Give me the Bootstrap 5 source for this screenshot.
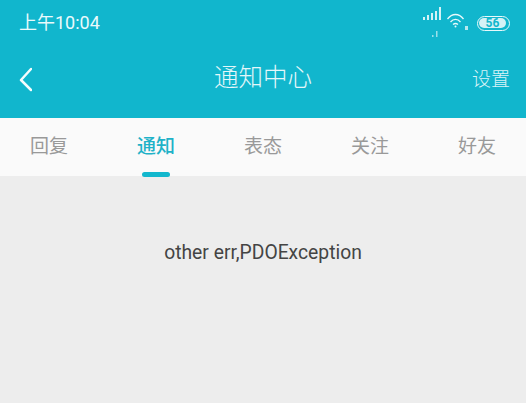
<!DOCTYPE html>
<html lang="zh">
<head>
    <meta charset="UTF-8">
    <title>通知中心</title>
    <link href="https://cdn.jsdelivr.net/npm/bootstrap@5.3.0/dist/css/bootstrap.min.css" rel="stylesheet">
    <style>
        html, body { height: 100%; overflow: hidden; }
        body { background: #ededed; font-family: Roboto, "Noto Sans CJK SC", sans-serif; }
        .topbar { background: #11b6cd; color: #fff; height: 118px; }
        .statusrow { height: 46px; padding: 0 16px 0 19px; }
        .clock { font-size: 18px; line-height: 1; color: #eafafc; }
        .titlerow { height: 72px; padding: 0 16px 4px 19px; position: relative; }
        .pagetitle { font-size: 24.500px; position: absolute; left: 0; right: 0; top: 12px; text-align: center; line-height: 40px; color: #e4f7fa; font-weight: 300; }
        .setlink { font-size: 19px; color: #d8f3f7; font-weight: 300; }
        .tabrow { background: #fafafa; height: 58px; padding: 0 19px; }
        .tabitem { width: 60px; text-align: center; font-size: 19px; line-height: 57px; color: #999; position: relative; }
        .tabitem.on { color: #1fb2c8; font-weight: 500; }
        .tabitem.on::after { content: ""; position: absolute; left: 16px; bottom: -1px; width: 28px; height: 5px; border-radius: 3px; background: #12b7cd; }
        .errmsg { font-size: 19.300px; color: #444; text-align: center; padding-top: 62px; line-height: 30px; }
        .batt { width: 33px; height: 15px; border: 1.5px solid #e8f9fb; border-radius: 8px; padding: 1px; position: relative; }
        .battfill { display: block; width: 27px; height: 10px; background: #d5f2f6; border-radius: 5px; font-size: 12px; font-weight: 700; line-height: 10px; text-align: center; color: #12b7cd; }
    </style>
</head>
<body>
    <div class="topbar">
        <div class="statusrow d-flex align-items-center justify-content-between">
            <div class="clock">上午10:04</div>
            <div class="d-flex align-items-center gap-2">
                <svg width="47" height="46" viewBox="422 0 47 46">
                    <g fill="#d5f2f6">
                        <rect x="423" y="17" width="2" height="3"/><rect x="427" y="15" width="2" height="5"/><rect x="431" y="13" width="2" height="7"/><rect x="435" y="11" width="2" height="9"/><rect x="439" y="7" width="2" height="13"/>
                        <rect x="432" y="35" width="1.500" height="2" opacity=".7"/><rect x="436" y="31" width="1.500" height="6" opacity=".7"/>
                    </g>
                    <g fill="none" stroke="#e8f9fb" stroke-width="1.300">
                        <path d="M447.500 19c4.500-6 11.500-6 16 0"/><path d="M450.500 22c3-3.500 7-3.500 10 0"/><path d="M453 24.500c1.500-1.200 3.500-1.200 5 0"/>
                    </g>
                    <circle cx="455.500" cy="26.500" r="1" fill="#e8f9fb"/>
                    <rect x="465" y="26" width="3" height="4" fill="#b5e8ef"/>
                </svg>
                <div class="batt"><span class="battfill">56</span></div>
            </div>
        </div>
        <div class="titlerow d-flex align-items-center justify-content-between">
            <svg width="13" height="26" viewBox="0 0 13 26" fill="none" stroke="#f4fcfd" stroke-width="2.500" stroke-linecap="round" stroke-linejoin="round"><path d="M12 2 2 13l10 10"/></svg>
            <div class="pagetitle">通知中心</div>
            <div class="setlink">设置</div>
        </div>
    </div>
    <div class="tabrow d-flex justify-content-between">
        <div class="tabitem">回复</div>
        <div class="tabitem on">通知</div>
        <div class="tabitem">表态</div>
        <div class="tabitem">关注</div>
        <div class="tabitem">好友</div>
    </div>
    <div class="errmsg">other err,PDOException</div>
</body>
</html>
